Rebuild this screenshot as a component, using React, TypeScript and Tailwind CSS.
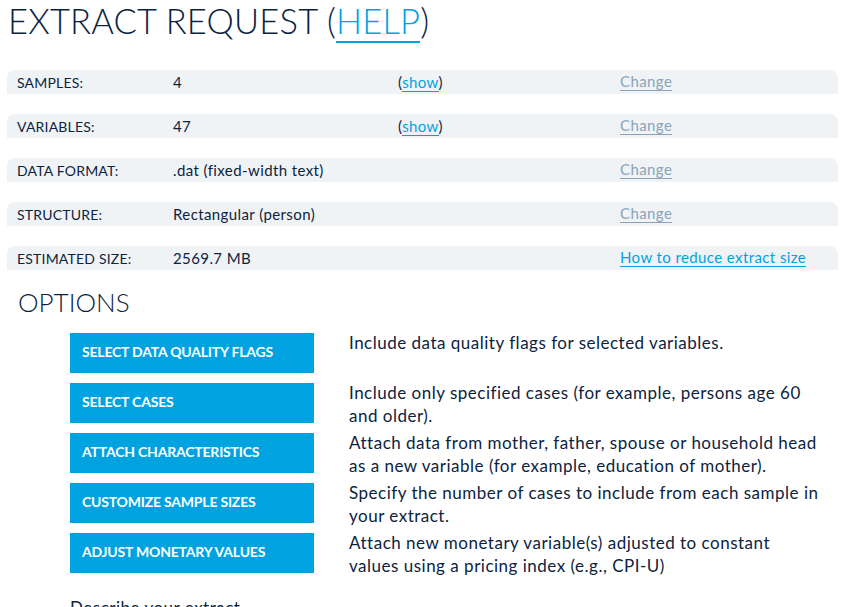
const summary = [
  { label: "SAMPLES:", value: "4", show: true, action: "Change" },
  { label: "VARIABLES:", value: "47", show: true, action: "Change" },
  { label: "DATA FORMAT:", value: ".dat (fixed-width text)", show: false, action: "Change" },
  { label: "STRUCTURE:", value: "Rectangular (person)", show: false, action: "Change" },
  { label: "ESTIMATED SIZE:", value: "2569.7 MB", show: false, action: "How to reduce extract size" },
];

const options = [
  {
    button: "SELECT DATA QUALITY FLAGS",
    text: "Include data quality flags for selected variables.",
  },
  {
    button: "SELECT CASES",
    text: "Include only specified cases (for example, persons age 60 and older).",
  },
  {
    button: "ATTACH CHARACTERISTICS",
    text: "Attach data from mother, father, spouse or household head as a new variable (for example, education of mother).",
  },
  {
    button: "CUSTOMIZE SAMPLE SIZES",
    text: "Specify the number of cases to include from each sample in your extract.",
  },
  {
    button: "ADJUST MONETARY VALUES",
    text: "Attach new monetary variable(s) adjusted to constant values using a pricing index (e.g., CPI-U)",
  },
];

export default function App() {
  return (
    <main
      className="min-h-screen bg-white text-[#0c2340]"
      style={{ fontFamily: "Lato, 'Noto Sans', sans-serif" }}
    >
      <h1 className="pl-2 pt-[2px] text-[34.5px] font-light leading-[38px] tracking-[0.2px]">
        EXTRACT REQUEST (
        <a className="border-b-2 border-[#00a3e0] text-[#00a3e0]">HELP</a>)
      </h1>

      <div className="mt-[30px] flex flex-col gap-5 pl-[7px] pr-[9px]">
        {summary.map((row) => (
          <div
            key={row.label}
            className="flex h-6 items-center rounded-t-lg bg-[#f0f3f6] text-[15px] tracking-[0.4px]"
          >
            <span className="w-[166px] pl-[10px] text-[14px] tracking-[0.2px]">{row.label}</span>
            <span className="w-[225px]">{row.value}</span>
            <span className="w-[222px]">
              {row.show && (
                <>
                  (<a className="border-b border-[#00a3e0] leading-[17px] text-[#00a3e0]">show</a>)
                </>
              )}
            </span>
            {row.action === "Change" ? (
              <a className="border-b border-[#8ba3b8] leading-[17px] text-[#8ba3b8]">
                {row.action}
              </a>
            ) : (
              <a className="border-b border-[#00a3e0] leading-[17px] text-[#00a3e0]">
                {row.action}
              </a>
            )}
          </div>
        ))}
      </div>

      <h2 className="mt-[14px] pl-[18px] text-[26px] font-light leading-[36px]">OPTIONS</h2>

      <div className="mt-[13px] flex flex-col pl-[70px]">
        {options.map((o) => (
          <div key={o.button} className="flex h-[50px]">
            <button className="h-10 w-[244px] shrink-0 bg-[#00a3e0] pb-[3px] pl-3 text-left text-[14px] font-bold tracking-[-0.2px] text-white">
              {o.button}
            </button>
            <p className="-mt-[2px] ml-[35px] w-[472px] text-[17px] leading-[23px] tracking-[0.5px]">
              {o.text}
            </p>
          </div>
        ))}
      </div>

      <p className="mt-[12px] pl-[70px] text-[17px] tracking-[0.5px]">Describe your extract</p>
    </main>
  );
}
